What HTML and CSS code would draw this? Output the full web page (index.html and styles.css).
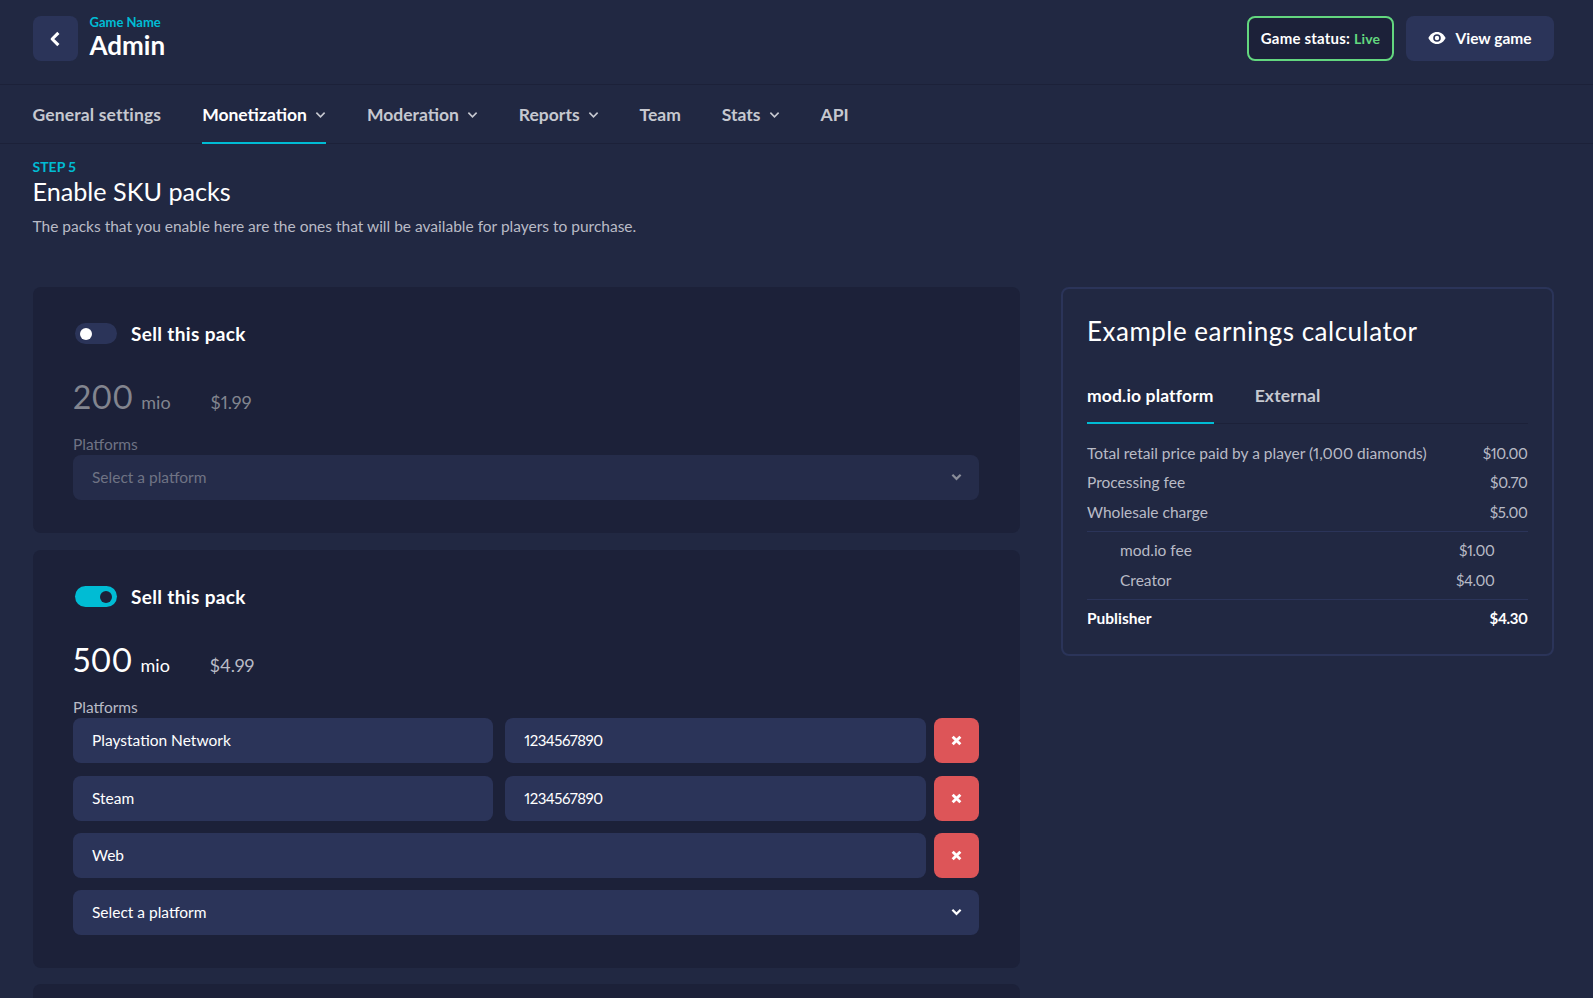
FILE: index.html
```html
<!DOCTYPE html>
<html lang="en">
<head>
<meta charset="utf-8">
<title>Admin</title>
<link rel="stylesheet" href="styles.css">
</head>
<body>
<header class="topbar">
  <div class="brand">
    <button class="back" aria-label="Back"><svg width="18" height="18" viewBox="0 0 16 16"><path d="M11 2.500 5.500 8l5.500 5.500" fill="none" stroke="#fff" stroke-width="2.800" stroke-linejoin="round"/></svg></button>
    <div class="brand-text">
      <div class="game-name">Game Name</div>
      <div class="admin">Admin</div>
    </div>
  </div>
  <div class="actions">
    <div class="status">Game status:&nbsp;<span class="live">Live</span></div>
    <button class="view"><svg width="18" height="12" viewBox="0 0 18 12"><path fill-rule="evenodd" fill="#fff" d="M9 0c4 0 7 2.600 8.600 6C16 9.400 13 12 9 12S2 9.400.4 6C2 2.600 5 0 9 0Zm0 2.200A3.800 3.800 0 1 0 9 9.800 3.800 3.800 0 0 0 9 2.200Zm0 1.600A2.200 2.200 0 1 1 9 8.200 2.200 2.200 0 0 1 9 3.800Z"/></svg>View game</button>
  </div>
</header>
<nav class="tabs-main">
  <a class="nav-item">General settings</a>
  <a class="nav-item active">Monetization<svg class="chev" viewBox="0 0 12 8"><path d="M1.500 1.500 6 6l4.500-4.500"/></svg></a>
  <a class="nav-item">Moderation<svg class="chev" viewBox="0 0 12 8"><path d="M1.500 1.500 6 6l4.500-4.500"/></svg></a>
  <a class="nav-item">Reports<svg class="chev" viewBox="0 0 12 8"><path d="M1.500 1.500 6 6l4.500-4.500"/></svg></a>
  <a class="nav-item">Team</a>
  <a class="nav-item">Stats<svg class="chev" viewBox="0 0 12 8"><path d="M1.500 1.500 6 6l4.500-4.500"/></svg></a>
  <a class="nav-item">API</a>
</nav>
<main class="main">
  <div class="step">STEP 5</div>
  <h1 class="title">Enable SKU packs</h1>
  <p class="desc">The packs that you enable here are the ones that will be available for players to purchase.</p>
  <div class="columns">
    <div class="packs">
      <section class="card off">
        <div class="toggle-row">
          <span class="toggle"><span class="knob"></span></span>
          <span class="toggle-label">Sell this pack</span>
        </div>
        <div class="amount"><span class="num">200</span><span class="unit">mio</span><span class="price">$1.99</span></div>
        <div class="label">Platforms</div>
        <div class="field select"><span>Select a platform</span><svg class="sel-chev" viewBox="0 0 12 8"><path d="M1.500 1.500 6 6l4.500-4.500"/></svg></div>
      </section>
      <section class="card on">
        <div class="toggle-row">
          <span class="toggle"><span class="knob"></span></span>
          <span class="toggle-label">Sell this pack</span>
        </div>
        <div class="amount"><span class="num">500</span><span class="unit">mio</span><span class="price">$4.99</span></div>
        <div class="label">Platforms</div>
        <div class="rows">
          <div class="row">
            <div class="field grow">Playstation Network</div>
            <div class="field grow sku">1234567890</div>
            <button class="remove" aria-label="Remove"><svg viewBox="0 0 10 10"><path d="M1.500 1.500l7 7M8.500 1.500l-7 7"/></svg></button>
          </div>
          <div class="row">
            <div class="field grow">Steam</div>
            <div class="field grow sku">1234567890</div>
            <button class="remove" aria-label="Remove"><svg viewBox="0 0 10 10"><path d="M1.500 1.500l7 7M8.500 1.500l-7 7"/></svg></button>
          </div>
          <div class="row">
            <div class="field grow">Web</div>
            <button class="remove" aria-label="Remove"><svg viewBox="0 0 10 10"><path d="M1.500 1.500l7 7M8.500 1.500l-7 7"/></svg></button>
          </div>
          <div class="field select"><span>Select a platform</span><svg class="sel-chev" viewBox="0 0 12 8"><path d="M1.500 1.500 6 6l4.500-4.500"/></svg></div>
        </div>
      </section>
      <section class="card stub"></section>
    </div>
    <aside class="calc">
      <h2 class="calc-title">Example earnings calculator</h2>
      <div class="calc-tabs">
        <span class="calc-tab active">mod.io platform</span>
        <span class="calc-tab">External</span>
      </div>
      <div class="group first">
        <div class="line"><span>Total retail price paid by a player (1,000 diamonds)</span><span class="val">$10.00</span></div>
        <div class="line"><span>Processing fee</span><span class="val">$0.70</span></div>
        <div class="line"><span>Wholesale charge</span><span class="val">$5.00</span></div>
      </div>
      <div class="group sub">
        <div class="line"><span>mod.io fee</span><span class="val">$1.00</span></div>
        <div class="line"><span>Creator</span><span class="val">$4.00</span></div>
      </div>
      <div class="group total">
        <div class="line"><span>Publisher</span><span class="val">$4.30</span></div>
      </div>
    </aside>
  </div>
</main>
</body>
</html>
```
FILE: styles.css
```css
* { box-sizing: border-box; }
html, body { margin: 0; height: 100%; }
body {
  background: #212842;
  color: #fff;
  font-family: "Lato", "Liberation Sans", sans-serif;
  font-variant-numeric: proportional-nums;
  overflow: hidden;
  height: 998px;
}
button { font-family: inherit; border: 0; color: inherit; padding: 0; }

.topbar {
  height: 85px;
  padding: 16px 39px 0 32.500px;
  display: flex;
  justify-content: space-between;
  align-items: flex-start;
  border-bottom: 1px solid #1c2139;
}
.brand { display: flex; gap: 12px; }
.back {
  width: 45px; height: 45px;
  background: #2b3459;
  border-radius: 8px;
  display: flex; align-items: center; justify-content: center;
}
.game-name { color: #00bcd4; font-size: 13px; font-weight: 700; line-height: 13px; }
.admin { font-size: 26px; font-weight: 700; line-height: 32px; }
.actions { display: flex; gap: 12px; }
.status {
  width: 147px; height: 45px;
  background: #1c2139;
  border: 2px solid #63d77f;
  border-radius: 8px;
  display: flex; align-items: center; justify-content: center;
  font-size: 15px; font-weight: 700;
  letter-spacing: .2px;
  white-space: nowrap;
  padding-bottom: 1px;
}
.live { color: #63d77f; font-size: 14px; }
.view {
  width: 148px; height: 45px;
  background: #2b3459;
  border-radius: 8px;
  display: flex; align-items: center; justify-content: center; gap: 9px;
  font-size: 15.500px; font-weight: 700;
  padding-bottom: 1px;
}

.tabs-main {
  height: 59px;
  padding: 0 33px 0 32.500px;
  display: flex;
  gap: 41px;
  border-bottom: 1px solid #1c2139;
}
.nav-item {
  display: flex; align-items: center; gap: 8px;
  height: 59px;
  padding-top: 2px;
  font-size: 17.500px; font-weight: 700;
  color: #c6c8d0;
  border-bottom: 2px solid transparent;
}
.nav-item:first-child { letter-spacing: .15px; }
.nav-item.active { color: #fff; border-bottom-color: #00bcd4; }
.chev { width: 11px; height: 8px; fill: none; stroke: #c6c8d0; stroke-width: 1.800; }

.main { padding: 15px 39px 0 32.500px; }
.step { color: #00bcd4; font-size: 14px; font-weight: 700; line-height: 16px; }
.title { margin: 1px 0 0; font-size: 25.200px; font-weight: 400; line-height: 31px; }
.desc { margin: 9px 0 0; font-size: 15.500px; line-height: 20px; color: #b9bbc6; }

.columns { display: flex; gap: 41px; margin-top: 51px; align-items: flex-start; }
.packs { width: 987.500px; flex: none; display: flex; flex-direction: column; gap: 17px; }
.card { background: #1c2139; border-radius: 8px; padding: 36px 41px 33px 40.500px; }
.card.stub { height: 40px; padding: 0; margin-top: -1px; }

.toggle-row { display: flex; align-items: center; gap: 14.500px; height: 21px; padding-left: 1.500px; }
.toggle { width: 42px; height: 21px; border-radius: 11px; background: #2b3459; display: flex; align-items: center; padding: 0 5px; }
.knob { width: 12px; height: 12px; border-radius: 50%; background: #fff; }
.on .toggle { background: #00bcd4; justify-content: flex-end; }
.on .knob { background: #1c2139; }
.toggle-label { font-size: 19px; font-weight: 700; letter-spacing: .35px; }

.amount { display: flex; align-items: baseline; height: 40px; margin-top: 33px; line-height: 40px; }
.num { font-size: 32px; }
.unit { font-size: 18px; margin-left: 8px; }
.price { font-size: 18px; margin-left: 40px; color: #b9bbc6; }
.off .num, .off .unit, .off .price { color: #82858f; }

.label { font-size: 15.500px; line-height: 20px; margin-top: 17px; margin-bottom: 1px; color: #b9bbc6; }
.off .label { color: #6f7384; }

.field {
  height: 45px;
  background: #2b3459;
  border-radius: 8px;
  padding: 0 19px;
  display: flex; align-items: center;
  font-size: 15.500px;
  padding-bottom: 1px;
}
.grow { flex: 1 1 0; min-width: 0; }
.sku { font-size: 15px; letter-spacing: -.5px; }
.select { justify-content: space-between; }
.off .select { background: #252c4a; color: #6f7384; }
.sel-chev { width: 11px; height: 8px; fill: none; stroke: #fff; stroke-width: 2.400; margin-right: -2px; }
.off .sel-chev { stroke: #8a8d99; }

.rows { display: flex; flex-direction: column; gap: 12px; }
.row { display: flex; gap: 12px; }
.row:first-child { margin-bottom: .6px; }
.row .remove { margin-left: -4px; }
.remove {
  width: 45.500px; height: 45px; flex: none;
  background: #dd5558;
  border-radius: 8px;
  display: flex; align-items: center; justify-content: center;
}
.remove svg { width: 11px; height: 11px; fill: none; stroke: #fff; stroke-width: 2.600; }

.calc {
  width: 492.500px; flex: none; height: 369px;
  border: 2px solid #2b3459;
  border-radius: 8px;
  padding: 26px 24px 0;
}
.calc-title { margin: 0; font-size: 26px; font-weight: 400; line-height: 32px; letter-spacing: .5px; }
.calc-tabs { display: flex; gap: 41px; margin-top: 32px; border-bottom: 1px solid #1c2139; height: 45px; }
.calc-tab { height: 45px; line-height: 34px; font-size: 17.500px; font-weight: 700; letter-spacing: .15px; color: #c6c8d0; }
.calc-tab.active { color: #fff; border-bottom: 2px solid #00bcd4; }
.group.first { padding-top: 14.500px; padding-bottom: 3.500px; }
.group.sub { border-top: 1px solid #2b3459; padding: 4px 33px 3px 33px; }
.group.total { border-top: 1px solid #2b3459; padding-top: 4px; font-weight: 700; color: #fff; }
.line { display: flex; justify-content: space-between; line-height: 29.700px; font-size: 15.500px; color: #b9bbc6; }
.val { font-size: 15px; letter-spacing: -.4px; }
.total .line { color: #fff; }
```
